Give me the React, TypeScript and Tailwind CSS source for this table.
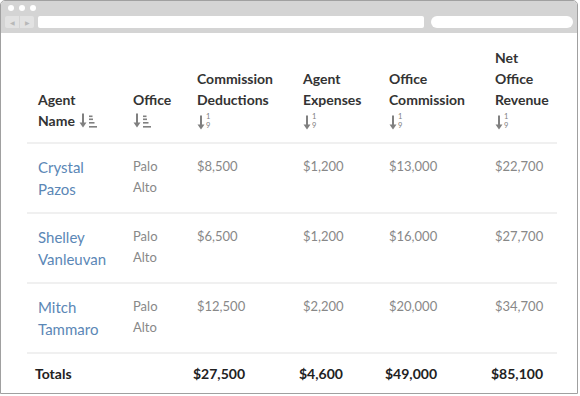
import React from 'react';

type Row = {
  name: [string, string];
  office: [string, string];
  deductions: string;
  expenses: string;
  commission: string;
  revenue: string;
};

const ROWS: Row[] = [
  { name: ['Crystal', 'Pazos'], office: ['Palo', 'Alto'], deductions: '$8,500', expenses: '$1,200', commission: '$13,000', revenue: '$22,700' },
  { name: ['Shelley', 'Vanleuvan'], office: ['Palo', 'Alto'], deductions: '$6,500', expenses: '$1,200', commission: '$16,000', revenue: '$27,700' },
  { name: ['Mitch', 'Tammaro'], office: ['Palo', 'Alto'], deductions: '$12,500', expenses: '$2,200', commission: '$20,000', revenue: '$34,700' },
];

const Arrow = () => (
  <svg width="8" height="15" viewBox="0 0 8 15" className="block">
    <path d="M4 0.5 V12" stroke="#808080" strokeWidth="2" />
    <path d="M0.5 9.5 L4 14.5 L7.5 9.5 Z" fill="#808080" />
  </svg>
);

const AlphaSort = () => (
  <span className="inline-flex items-end gap-[1px]">
    <Arrow />
    <svg width="9" height="15" viewBox="0 0 9 15" className="block">
      <rect x="1" y="2.5" width="3.5" height="1.6" fill="#808080" />
      <rect x="1" y="5.5" width="4" height="1.6" fill="#808080" />
      <rect x="1" y="9" width="5.5" height="1.6" fill="#808080" />
      <rect x="1" y="13" width="8" height="1.6" fill="#808080" />
    </svg>
  </span>
);

const NumSort = () => (
  <span className="inline-flex items-end gap-[1px]">
    <Arrow />
    <span className="flex flex-col text-[7.5px] leading-[9px] font-normal text-[#808080]">
      <span>1</span>
      <span>9</span>
    </span>
  </span>
);

const Head = ({ lines, last, numeric }: { lines: string[]; last?: string; numeric?: boolean }) => (
  <th className="align-bottom text-left font-bold text-[14px] leading-[21px] text-[#333] px-[11px] pb-[11px]">
    {lines.map((l) => (
      <div key={l}>{l}</div>
    ))}
    <div className="h-[21px] flex items-center gap-[4px]">
      {last && <span>{last}</span>}
      {numeric ? <NumSort /> : <AlphaSort />}
    </div>
  </th>
);

export default function App() {
  return (
    <div className="w-[580px] h-[396px] bg-white" style={{ fontFamily: 'Lato, "Open Sans", sans-serif' }}>
      <div className="w-[578px] h-[394px] border border-[#a0a0a0] rounded-t-[5px] overflow-hidden flex flex-col">
        <div className="h-[32px] bg-[#d4d4d4] flex flex-col px-[4px] pt-[4px]">
          <div className="flex gap-[5px] pl-[3px]">
            <span className="w-[6px] h-[6px] rounded-full bg-white" />
            <span className="w-[6px] h-[6px] rounded-full bg-white" />
            <span className="w-[6px] h-[6px] rounded-full bg-white" />
          </div>
          <div className="flex items-center gap-[4px] mt-[5px] h-[12px]">
            <div className="flex h-[12px] w-[29px] rounded-[2px] bg-[#e2e2e2]">
              <span className="flex-1 flex items-center justify-center text-[6px] text-[#b8b8b8] border-r border-[#d4d4d4]">◀</span>
              <span className="flex-1 flex items-center justify-center text-[6px] text-[#b8b8b8]">▶</span>
            </div>
            <div className="h-[12px] w-[386px] bg-white rounded-[2px]" />
            <div className="h-[12px] w-[142px] ml-[3px] bg-white rounded-full" />
          </div>
        </div>
        <div className="pl-[26px] pt-[14px]">
          <table className="table-fixed border-collapse w-[530px]">
            <colgroup>
              <col className="w-[95px]" />
              <col className="w-[64px]" />
              <col className="w-[106px]" />
              <col className="w-[86px]" />
              <col className="w-[106px]" />
              <col className="w-[73px]" />
            </colgroup>
            <thead>
              <tr>
                <Head lines={['Agent']} last="Name" />
                <Head lines={['Office']} />
                <Head lines={['Commission', 'Deductions']} numeric />
                <Head lines={['Agent', 'Expenses']} numeric />
                <Head lines={['Office', 'Commission']} numeric />
                <Head lines={['Net', 'Office', 'Revenue']} numeric />
              </tr>
            </thead>
            <tbody>
              {ROWS.map((r) => (
                <tr key={r.name[0]} className="border-t-2 border-[#f0f0f0] align-top">
                  <td className="px-[11px] pt-[12px] pb-[12px] text-[15px] leading-[22px] text-[#5b87b6]">
                    <div>{r.name[0]}</div>
                    <div>{r.name[1]}</div>
                  </td>
                  <td className="px-[11px] pt-[12px] text-[13px] leading-[21px] text-[#888]">
                    <div>{r.office[0]}</div>
                    <div>{r.office[1]}</div>
                  </td>
                  <td className="px-[11px] pt-[12px] text-[13px] leading-[21px] text-[#888]">{r.deductions}</td>
                  <td className="px-[11px] pt-[12px] text-[13px] leading-[21px] text-[#888]">{r.expenses}</td>
                  <td className="px-[11px] pt-[12px] text-[13px] leading-[21px] text-[#888]">{r.commission}</td>
                  <td className="px-[11px] pt-[12px] text-[13px] leading-[21px] text-[#888]">{r.revenue}</td>
                </tr>
              ))}
            </tbody>
            <tfoot>
              <tr className="border-t-2 border-[#f0f0f0] font-bold text-[14px] leading-[22px] text-[#222]">
                <td className="pl-[8px] pt-[9px]">Totals</td>
                <td className="pl-[8px] pt-[9px]" />
                <td className="pl-[7px] pt-[9px]">$27,500</td>
                <td className="pl-[7px] pt-[9px]">$4,600</td>
                <td className="pl-[7px] pt-[9px]">$49,000</td>
                <td className="pl-[7px] pt-[9px]">$85,100</td>
              </tr>
            </tfoot>
          </table>
        </div>
      </div>
    </div>
  );
}
